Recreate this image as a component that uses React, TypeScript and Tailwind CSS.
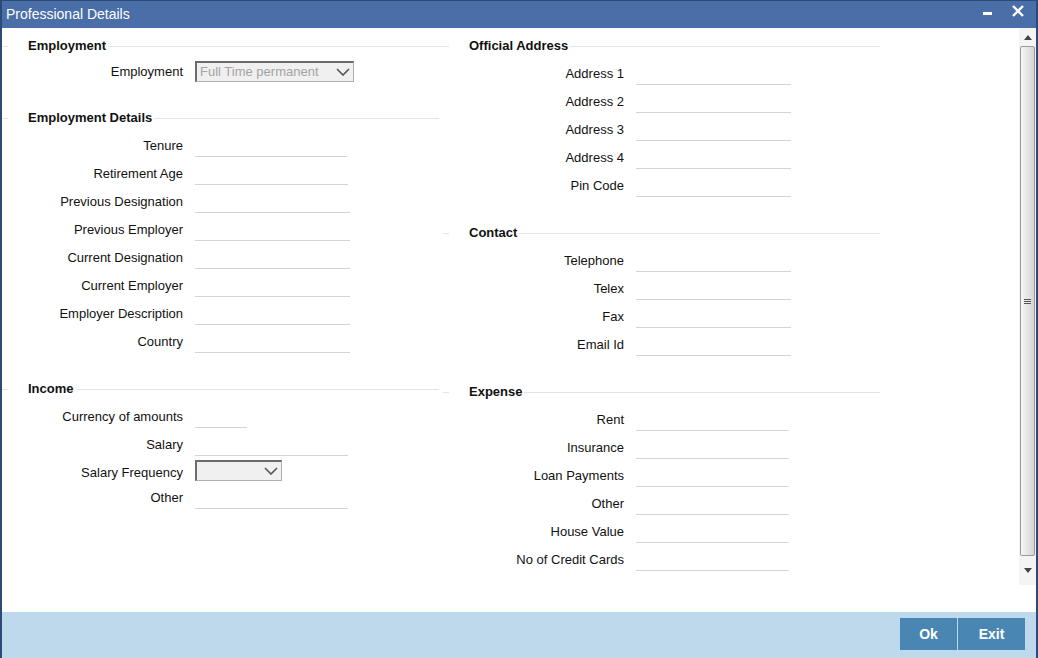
import React from "react";

type Field = { label: string; w?: number; select?: { w: number; value?: string; lift: string }; tight?: boolean };

const employment: Field[] = [{ label: "Employment", select: { w: 159, value: "Full Time permanent", lift: "mb-[2px]" } }];
const details: Field[] = [
  { label: "Tenure", w: 152 },
  { label: "Retirement Age", w: 153 },
  { label: "Previous Designation", w: 155 },
  { label: "Previous Employer", w: 155 },
  { label: "Current Designation", w: 155 },
  { label: "Current Employer", w: 155 },
  { label: "Employer Description", w: 155 },
  { label: "Country", w: 155 },
];
const income: Field[] = [
  { label: "Currency of amounts", w: 52 },
  { label: "Salary", w: 153 },
  { label: "Salary Frequency", select: { w: 87, lift: "mb-[6px]" } },
  { label: "Other", w: 153, tight: true },
];
const address: Field[] = ["Address 1", "Address 2", "Address 3", "Address 4", "Pin Code"].map((l) => ({ label: l, w: 155 }));
const contact: Field[] = ["Telephone", "Telex", "Fax", "Email Id"].map((l) => ({ label: l, w: 155 }));
const expense: Field[] = ["Rent", "Insurance", "Loan Payments", "Other", "House Value", "No of Credit Cards"].map((l) => ({
  label: l,
  w: 153,
}));

function Chevron() {
  return (
    <svg width="14" height="8" viewBox="0 0 14 8" className="shrink-0">
      <polyline points="1,1 7,7 13,1" fill="none" stroke="#555" strokeWidth="1.6" />
    </svg>
  );
}

function Header({ title, lineEnd }: { title: string; lineEnd: number }) {
  return (
    <div className="flex h-[20px] items-center" style={{ width: lineEnd }}>
      <div className="h-px w-[6px] bg-[#e4e4e4]" />
      <div className="ml-[20px] text-[13px] font-bold text-[#111]">{title}</div>
      <div className="ml-[2px] h-px flex-1 bg-[#e4e4e4]" />
    </div>
  );
}

function Row({ f, labelW }: { f: Field; labelW: number }) {
  return (
    <div className={`flex h-[28px] items-center ${f.tight ? "-mt-[3px]" : ""}`}>
      <div className="shrink-0 text-right text-[13px] text-[#111]" style={{ width: labelW }}>
        {f.label}
      </div>
      {f.select ? (
        <div
          className={`ml-[12px] flex h-[21px] items-center justify-between border border-[#b0b0b0] border-t-[#6b6b6b] border-l-[#6b6b6b] border-t-2 border-l-2 bg-[#f0f0f0] pl-[3px] pr-[3px] ${f.select.lift}`}
          style={{ width: f.select.w }}
        >
          <span className="text-[13px] text-[#a3a3a3]">{f.select.value ?? ""}</span>
          <Chevron />
        </div>
      ) : (
        <div className="ml-[12px] h-[22px] border-b border-[#d4d4d4]" style={{ width: f.w }} />
      )}
    </div>
  );
}

function Section({
  title,
  fields,
  labelW,
  lineEnd,
  className,
  tightTop,
}: {
  title: string;
  fields: Field[];
  labelW: number;
  lineEnd: number;
  className?: string;
  tightTop?: boolean;
}) {
  return (
    <div className={className}>
      <Header title={title} lineEnd={lineEnd} />
      <div className={`flex flex-col ${tightTop ? "mt-[2px]" : "mt-[4px]"}`}>
        {fields.map((f) => (
          <Row key={title + f.label} f={f} labelW={labelW} />
        ))}
      </div>
    </div>
  );
}

function Scrollbar() {
  return (
    <div className="flex h-[557px] w-[17px] shrink-0 flex-col bg-[#f4f4f4]">
      <div className="flex h-[18px] items-center justify-center">
        <svg width="8" height="5" viewBox="0 0 8 5">
          <polygon points="0,5 8,5 4,0" fill="#444" />
        </svg>
      </div>
      <div className="mx-[1px] flex flex-1 items-center justify-center rounded-[2px] border border-[#9a9a9a] bg-gradient-to-r from-[#f6f6f6] via-[#e6e6e6] to-[#d4d4d4]">
        <div className="flex flex-col gap-[1px]">
          <div className="h-px w-[7px] bg-[#555]" />
          <div className="h-px w-[7px] bg-[#555]" />
          <div className="h-px w-[7px] bg-[#555]" />
        </div>
      </div>
      <div className="flex h-[29px] items-center justify-center">
        <svg width="8" height="5" viewBox="0 0 8 5">
          <polygon points="0,0 8,0 4,5" fill="#444" />
        </svg>
      </div>
    </div>
  );
}

export default function App() {
  return (
    <div className="flex h-[658px] w-[1038px] flex-col overflow-hidden border-x-2 border-[#2c4a78] bg-white font-['Liberation_Sans',Arial,sans-serif]">
      <div className="flex h-[28px] shrink-0 items-center justify-between border-t border-[#2c4a78] bg-[#4a6ea8] pl-[4px] pr-[12px]">
        <span className="text-[14px] text-white">Professional Details</span>
        <div className="flex items-center gap-[20px]">
          <div className="mt-[-2px] h-[3px] w-[9px] bg-white" />
          <svg width="12" height="12" viewBox="0 0 12 12" className="mt-[-8px]">
            <path d="M1 1 L11 11 M11 1 L1 11" stroke="white" strokeWidth="2.4" />
          </svg>
        </div>
      </div>

      <div className="flex flex-1">
        <div className="flex flex-1">
          <div className="w-[441px] shrink-0">
            <Section className="mt-[8px]" tightTop title="Employment" fields={employment} labelW={181} lineEnd={445} />
            <Section className="mt-[22px]" title="Employment Details" fields={details} labelW={181} lineEnd={437} />
            <Section className="mt-[23px]" title="Income" fields={income} labelW={181} lineEnd={437} />
          </div>
          <div className="flex-1">
            <Section className="mt-[8px]" title="Official Address" fields={address} labelW={181} lineEnd={437} />
            <Section className="mt-[23px]" title="Contact" fields={contact} labelW={181} lineEnd={437} />
            <Section className="mt-[23px]" title="Expense" fields={expense} labelW={181} lineEnd={437} />
          </div>
        </div>
        <Scrollbar />
      </div>

      <div className="flex h-[46px] shrink-0 items-start justify-end bg-[#bed9ec] pr-[11px] pt-[6px]">
        <button className="h-[32px] w-[57px] bg-[#4a86b4] text-[14px] font-bold text-white">Ok</button>
        <button className="ml-px h-[32px] w-[67px] bg-[#4a86b4] text-[14px] font-bold text-white">Exit</button>
      </div>
    </div>
  );
}
